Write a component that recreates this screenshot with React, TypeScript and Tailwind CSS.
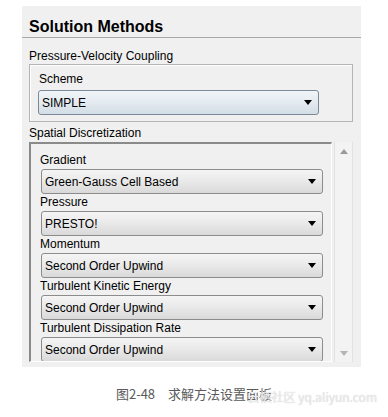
import React from 'react';

const UI_FONT = { fontFamily: '"Liberation Sans", Arial, sans-serif' };

function Arrow({ color = '#000' }: { color?: string }) {
  return (
    <svg width="8" height="5" viewBox="0 0 8 5">
      <polygon points="0,0 8,0 4,5" fill={color} />
    </svg>
  );
}

function Dropdown({ value, blue = false }: { value: string; blue?: boolean }) {
  const skin = blue
    ? 'border-[#7b8a98] bg-[linear-gradient(to_bottom,#f1f5f8_0%,#e3eaf0_50%,#d3dde5_100%)]'
    : 'border-[#8c8c8c] bg-[linear-gradient(to_bottom,#f5f5f5_0%,#e9e9e9_50%,#d9d9d9_100%)]';
  return (
    <div className={`flex h-[25px] items-center justify-between rounded-[3px] border pl-[3px] pr-[6px] text-[12px] text-black ${skin}`}>
      <span>{value}</span>
      <Arrow />
    </div>
  );
}

const FIELDS = [
  { label: 'Gradient', value: 'Green-Gauss Cell Based' },
  { label: 'Pressure', value: 'PRESTO!' },
  { label: 'Momentum', value: 'Second Order Upwind' },
  { label: 'Turbulent Kinetic Energy', value: 'Second Order Upwind' },
  { label: 'Turbulent Dissipation Rate', value: 'Second Order Upwind' },
];

export default function App() {
  return (
    <div className="relative h-[417px] w-[388px] bg-white pl-[22px] pt-[6px]" style={UI_FONT}>
      {/* Panel */}
      <div className="h-[361px] w-[339px] bg-[#f0f0f0] text-[12px] text-black">
        <div className="border-b border-[#a8a8a8] pb-[1px] pl-[7px] pt-[11px]">
          <h2 className="text-[16px] font-bold leading-[19px] text-black">Solution Methods</h2>
        </div>

        <div className="pl-[7px] pr-[8px] pt-[11px]">
          <div className="leading-[15px]">Pressure-Velocity Coupling</div>

          {/* Pressure-Velocity group */}
          <div className="h-[58px] border border-[#b5b5b5] pb-[5px] pl-[8px] pr-[33px] pt-[7px] shadow-[inset_1px_1px_0_#fff]">
            <div className="ml-[1px] leading-[15px]">Scheme</div>
            <div className="mt-[3px]">
              <Dropdown value="SIMPLE" blue />
            </div>
          </div>

          <div className="mt-[4px] leading-[15px]">Spatial Discretization</div>

          {/* Scrolling list */}
          <div className="mt-[1px] flex h-[220px]">
            <div className="w-[304px] overflow-hidden border-l-2 border-t-2 border-b border-r border-l-[#8a8a8a] border-t-[#8a8a8a] border-b-white border-r-white pl-[9px] pr-[8px] pt-[8px]">
              {FIELDS.map(f => (
                <div key={f.label}>
                  <div className="h-[17px] leading-[17px]">{f.label}</div>
                  <div className="ml-[1px]">
                    <Dropdown value={f.value} />
                  </div>
                </div>
              ))}
            </div>
            <div className="ml-[2px] flex w-[19px] flex-col items-center justify-between border-x border-[#e2e2e2] bg-[#f3f3f3] pb-[6px] pt-[7px]">
              <svg width="8" height="5" viewBox="0 0 8 5">
                <polygon points="4,0 8,5 0,5" fill="#9a9a9a" />
              </svg>
              <Arrow color="#b4b4b4" />
            </div>
          </div>
        </div>
      </div>

      {/* Caption */}
      <div
        className="mt-[18px] pr-[22px] text-center text-[13px] leading-[18px] text-[#5a5a5a]"
        style={{ fontFamily: '"Noto Sans CJK SC", "Noto Sans", sans-serif' }}
      >
        图2-48　求解方法设置面板
      </div>

      {/* Watermark */}
      <div
        className="absolute right-[11px] top-[389px] text-[12px] leading-[16px] text-[#ececec] [text-shadow:0_0_1px_#c8c8c8]"
        style={{ fontFamily: '"Noto Sans CJK SC", "Liberation Sans", sans-serif' }}
      >
        云栖社区 yq.aliyun.com
      </div>
    </div>
  );
}
